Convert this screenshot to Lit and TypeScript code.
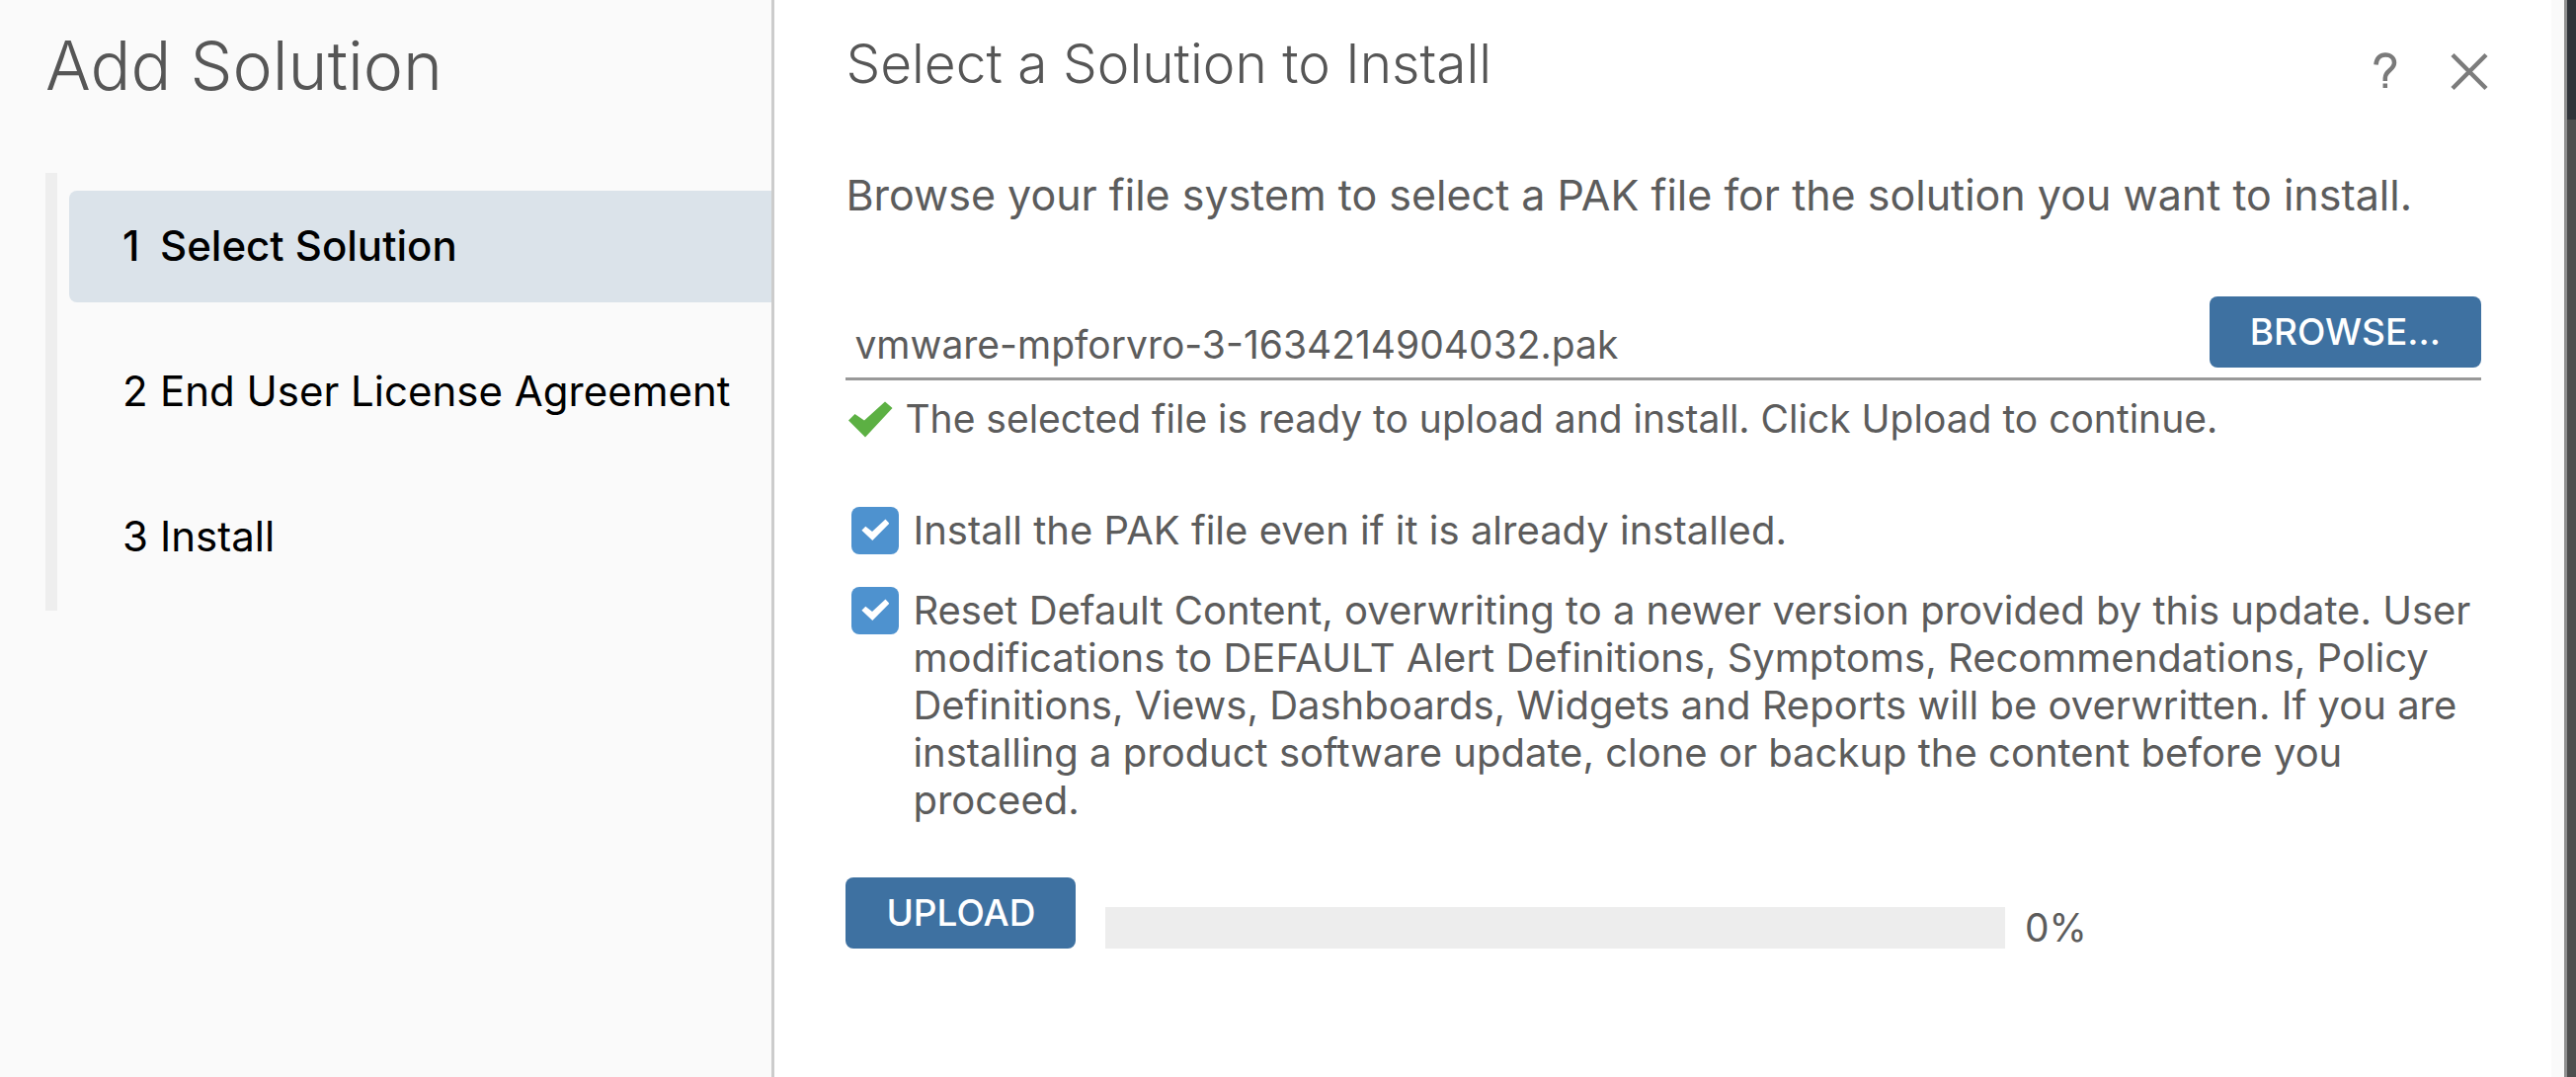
import { LitElement, html, css, svg } from "lit";
import { customElement, property, state } from "lit/decorators.js";
import { classMap } from "lit/directives/class-map.js";

interface Step {
  label: string;
}

const STEPS: Step[] = [
  { label: "Select Solution" },
  { label: "End User License Agreement" },
  { label: "Install" },
];

const helpIcon = svg`
  <svg viewBox="0 0 48 48" width="48" height="48" fill="none" stroke="#7a7a7a" stroke-width="4.500" aria-hidden="true">
    <path d="M14.500 17.500 C15 10.500 19 7.500 24 7.500 C29.500 7.500 33 11 33 15.500 C33 23 23.800 23 23.800 31 V34" />
    <path d="M23.800 36.500 V41" />
  </svg>`;

const closeIcon = svg`
  <svg viewBox="0 0 48 48" width="48" height="48" fill="none" stroke="#7c7c7c" stroke-width="4.500" aria-hidden="true">
    <path d="M7 7.500 L41 41.500 M41 7.500 L7 41.500" />
  </svg>`;

const readyIcon = svg`
  <svg viewBox="0 0 48 40" width="48" height="40" aria-hidden="true">
    <path d="M3 21.500 L9.500 15 L19 21.500 L40 2.500 L47.500 9 L20 38.500 Z" fill="#5cb043" />
  </svg>`;

@customElement("wizard-steps")
class WizardSteps extends LitElement {
  @property({ type: Number }) current = 0;

  static styles = css`
    :host {
      display: block;
    }
    .steps {
      list-style: none;
      margin: 0;
      padding: 18px 0 18px 12px;
      border-left: 12px solid #eeeeee;
      display: flex;
      flex-direction: column;
      gap: 34px;
    }
    .step {
      display: flex;
      align-items: center;
      box-sizing: border-box;
      width: 100%;
      height: 113px;
      padding: 0 0 2px 54px;
      border: 0;
      border-radius: 8px 0 0 8px;
      background: none;
      color: #000;
      font: inherit;
      font-size: 42px;
      line-height: 48px;
      text-align: left;
      white-space: nowrap;
      cursor: pointer;
    }
    .current {
      background: #dbe3ea;
      font-weight: 500;
    }
    .number {
      flex: none;
      width: 38px;
    }
  `;

  render() {
    return html`
      <ol class="steps">
        ${STEPS.map(
          (step, i) => html`
            <li>
              <button
                type="button"
                class=${classMap({ step: true, current: i === this.current })}
                aria-current=${i === this.current ? "step" : "false"}
              >
                <span class="number">${i + 1}</span>
                <span>${step.label}</span>
              </button>
            </li>
          `
        )}
      </ol>
    `;
  }
}

@customElement("app-root")
class AppRoot extends LitElement {
  @state() private fileName = "vmware-mpforvro-3-1634214904032.pak";
  @state() private progress = 0;

  static styles = css`
    :host {
      display: block;
      font-family: Inter, "Open Sans", sans-serif;
      font-weight: 400;
      color: #5c5c5c;
    }
    .page {
      display: flex;
      min-height: 100vh;
      background: #fafafa;
    }
    .sidebar {
      flex: none;
      box-sizing: border-box;
      width: calc(30% + 2px);
      padding: 26px 0 0 46px;
      border-right: 3px solid #cccccc;
    }
    h1,
    h2,
    p {
      margin: 0;
    }
    h1,
    h2 {
      color: #565656;
      font-weight: 300;
    }
    h1 {
      padding-bottom: 69px;
      font-size: 68px;
      line-height: 80px;
    }
    .main {
      flex: 1;
      min-width: 0;
      padding: 32px 71px 48px 72px;
      background: #fff;
    }
    .heading {
      display: flex;
      align-items: center;
      justify-content: space-between;
      padding-bottom: 69px;
    }
    h2 {
      font-size: 55px;
      line-height: 64px;
    }
    .tools {
      display: flex;
      gap: 37px;
      padding-top: 16px;
      margin-right: -12px;
    }
    .tool {
      display: block;
      width: 48px;
      height: 48px;
      padding: 0;
      border: 0;
      background: none;
      cursor: pointer;
    }
    .intro {
      font-size: 43px;
      line-height: 64px;
    }
    .picker {
      display: flex;
      align-items: flex-start;
      gap: 24px;
      margin-top: 71px;
      padding-bottom: 9px;
      border-bottom: 3px solid #999999;
    }
    .file {
      flex: 1;
      min-width: 0;
      height: 48px;
      margin-top: 25px;
      padding: 0 0 0 9px;
      border: 0;
      background: none;
      color: inherit;
      font: inherit;
      font-size: 39px;
      line-height: 48px;
      outline: none;
    }
    .action {
      box-sizing: border-box;
      height: 72px;
      padding: 0 41px;
      border: 0;
      border-radius: 8px;
      background: #3e71a1;
      color: #fff;
      font: inherit;
      font-size: 37px;
      font-weight: 500;
      line-height: 70px;
      cursor: pointer;
    }
    .status {
      display: flex;
      align-items: center;
      gap: 12px;
      padding-top: 15px;
      font-size: 39px;
      line-height: 48px;
    }
    .options {
      display: grid;
      gap: 33px;
      padding: 65px 0 0 6px;
    }
    .option {
      display: flex;
      gap: 14px;
      font-size: 40px;
      line-height: 48px;
    }
    .box {
      flex: none;
      appearance: none;
      width: 48px;
      height: 48px;
      margin: 0;
      border-radius: 8px;
      background: #fff;
      box-shadow: inset 0 0 0 2px #999999;
      display: grid;
      place-items: center;
    }
    .box:checked {
      background: #4e92cf;
      box-shadow: none;
    }
    .box:checked::before {
      content: "";
      width: 28px;
      height: 24px;
      margin-bottom: 2px;
      background: #fff;
      clip-path: polygon(0 53%, 14% 36%, 38% 58%, 86% 6%, 100% 24%, 39% 96%);
    }
    .upload {
      display: flex;
      align-items: flex-end;
      padding-top: 54px;
    }
    .bar {
      width: 55%;
      height: 42px;
      margin: 0 20px 0 30px;
      background: #ededed;
    }
    .fill {
      height: 100%;
      background: #4e92cf;
    }
    .percent {
      font-size: 39px;
      line-height: 42px;
    }
    .backdrop {
      flex: none;
      display: grid;
      grid-template-columns: 13px 3px 9px;
      grid-template-rows: 121px 1fr;
    }
    .gutter {
      grid-row: 1 / 3;
      background: #fafafa;
    }
    .edge {
      grid-row: 1 / 3;
      background: #8f8f8f;
    }
    .dark {
      background: #303339;
    }
    .shade {
      background: #4e4e4e;
    }
  `;

  render() {
    return html`
      <div class="page">
        <aside class="sidebar">
          <h1>Add Solution</h1>
          <wizard-steps .current=${0}></wizard-steps>
        </aside>
        <main class="main">
          <header class="heading">
            <h2>Select a Solution to Install</h2>
            <div class="tools">
              <button type="button" class="tool" aria-label="Help">${helpIcon}</button>
              <button type="button" class="tool" aria-label="Close">${closeIcon}</button>
            </div>
          </header>
          <p class="intro">Browse your file system to select a PAK file for the solution you want to install.</p>
          <div class="picker">
            <input class="file" type="text" aria-label="PAK file" readonly .value=${this.fileName} />
            <button type="button" class="action">BROWSE...</button>
          </div>
          <p class="status">
            ${readyIcon}
            <span>The selected file is ready to upload and install. Click Upload to continue.</span>
          </p>
          <div class="options">
            <div class="option">
              <input class="box" id="force" type="checkbox" checked />
              <label for="force">Install the PAK file even if it is already installed.</label>
            </div>
            <div class="option">
              <input class="box" id="reset" type="checkbox" checked />
              <label for="reset"
                >Reset Default Content, overwriting to a newer version provided by this update. User modifications to
                DEFAULT Alert Definitions, Symptoms, Recommendations, Policy Definitions, Views, Dashboards, Widgets and
                Reports will be overwritten. If you are installing a product software update, clone or backup the
                content before you proceed.</label
              >
            </div>
          </div>
          <div class="upload">
            <button type="button" class="action">UPLOAD</button>
            <div class="bar" role="progressbar" aria-label="Upload progress" aria-valuenow=${this.progress}>
              <div class="fill" style="width: ${this.progress}%"></div>
            </div>
            <span class="percent">${this.progress}%</span>
          </div>
        </main>
        <div class="backdrop" aria-hidden="true">
          <div class="gutter"></div>
          <div class="edge"></div>
          <div class="dark"></div>
          <div class="shade"></div>
        </div>
      </div>
    `;
  }
}
